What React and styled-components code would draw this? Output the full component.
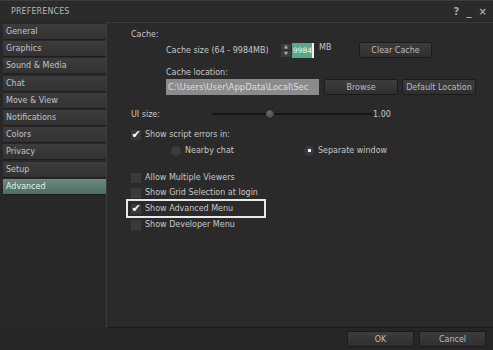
import React from 'react'
import styled, { createGlobalStyle } from 'styled-components'

const Global = createGlobalStyle`
  html, body { margin: 0; padding: 0; background: #1c1c1c; }
  body { font-family: "DejaVu Sans", "Liberation Sans", sans-serif; }
`

const Window = styled.div`
  width: 493px;
  height: 350px;
  background: #262626;
  display: flex;
  flex-direction: column;
  box-sizing: border-box;
  border-top: 1px solid #3c3c3c;
  color: #c8c8c8;
  font-size: 8px;
`

const TitleBar = styled.div`
  height: 20px;
  display: flex;
  align-items: center;
  justify-content: space-between;
  padding: 0 6px 0 11px;
  background: #2b2b2b;
  color: #b4b4b4;
  font-size: 8px;
  letter-spacing: 0.1px;
`

const TitleIcons = styled.div`
  display: flex;
  gap: 7px;
  align-items: center;
  color: #a8a8a8;
  font-size: 10px;
  font-weight: bold;
`

const Body = styled.div`
  flex: 1;
  display: flex;
  min-height: 0;
`

const Sidebar = styled.div`
  width: 103px;
  padding: 3px 0 0 3px;
  display: flex;
  flex-direction: column;
  gap: 1.2px;
  background: #282828;
`

const Tab = styled.div`
  height: 15px;
  flex: none;
  display: flex;
  align-items: center;
  padding-left: 3px;
  font-size: 8px;
  color: ${({ active }) => (active ? '#e6efe9' : '#c4c4c4')};
  background: ${({ active }) =>
    active
      ? 'linear-gradient(#6a8b7e, #4f6e62)'
      : 'linear-gradient(#3c3c3c, #323232)'};
  border-bottom: 1px solid #1e1e1e;
`

const Panel = styled.div`
  flex: 1;
  margin-top: 1px;
  border-top: 1px solid #3d3d3d;
  border-left: 1px solid #3d3d3d;
  border-bottom: 1px solid #1a1a1a;
  background: #2a2a2a;
  padding: 4px 0 0 24px;
  display: flex;
  flex-direction: column;
`

const Label = styled.div`
  height: 14px;
  display: flex;
  align-items: center;
  margin-top: ${({ mt }) => mt || 0}px;
  padding-left: ${({ indent }) => indent || 0}px;
`

const Row = styled.div`
  display: flex;
  align-items: center;
  height: ${({ h }) => h || 16}px;
  margin-top: ${({ mt }) => mt || 0}px;
  padding-left: ${({ indent }) => indent || 0}px;
`

const FixedText = styled.span`
  width: ${({ w }) => w}px;
  flex: none;
  white-space: nowrap;
`

const Button = styled.div`
  width: ${({ w }) => w}px;
  height: 16px;
  box-sizing: border-box;
  display: flex;
  align-items: center;
  justify-content: center;
  margin-left: ${({ ml }) => ml || 0}px;
  background: linear-gradient(#3d3d3d, #2f2f2f);
  border: 1px solid #1b1b1b;
  border-radius: 2px;
  color: #bdbdbd;
  font-size: 8px;
`

const Spinner = styled.div`
  display: flex;
  flex-direction: column;
  gap: 1px;
`

const SpinBtn = styled.div`
  width: 10px;
  height: 6px;
  background: #3c3c3c;
  display: flex;
  align-items: center;
  justify-content: center;
  color: #aaa;
  font-size: 5px;
  line-height: 1;
`

const NumInput = styled.div`
  width: 22px;
  height: 15px;
  box-sizing: border-box;
  background: #5aa889;
  border-right: 2px solid #f2f2f2;
  color: #eaf5ef;
  font-size: 7.5px;
  display: flex;
  align-items: center;
  padding-left: 1px;
  margin-left: 1px;
`

const Unit = styled.span`
  align-self: flex-start;
  margin: 1px 0 0 5px;
  width: 40px;
`

const PathInput = styled.div`
  width: 153px;
  height: 16px;
  box-sizing: border-box;
  background: #8b8b8b;
  color: #dedede;
  font-size: 8.5px;
  display: flex;
  align-items: center;
  padding-left: 2px;
  white-space: nowrap;
`

const Slider = styled.div`
  position: relative;
  width: 160px;
  height: 2px;
  background: #151515;
`

const Knob = styled.div`
  position: absolute;
  left: 53px;
  top: -4px;
  width: 10px;
  height: 10px;
  border-radius: 50%;
  background: radial-gradient(circle at 40% 35%, #6a6a6a, #3a3a3a);
  border: 1px solid #1f1f1f;
  box-sizing: border-box;
`

const Value = styled.span`
  margin-left: 1px;
`

const Check = styled.div`
  width: 10px;
  height: 10px;
  box-sizing: border-box;
  background: #3a3a3a;
  margin-right: 4px;
  color: #ffffff;
  font-size: 11px;
  line-height: 10px;
  font-weight: bold;
  text-align: center;
`

const CheckRow = styled.div`
  display: flex;
  align-items: center;
  height: ${({ focused }) => (focused ? 17 : 15)}px;
  padding-left: 4px;
  margin-left: -4px;
  margin-top: ${({ mt }) => mt || 0}px;
  width: 138px;
  box-sizing: border-box;
  outline: ${({ focused }) => (focused ? '2px solid #e8e8e8' : 'none')};
  outline-offset: -1px;
`

const Radio = styled.div`
  width: 10px;
  height: 10px;
  border-radius: 50%;
  background: #3b3b3b;
  margin-right: 4px;
  display: flex;
  align-items: center;
  justify-content: center;
  &::after {
    content: '';
    width: 3px;
    height: 3px;
    background: ${({ on }) => (on ? '#f0f0f0' : 'transparent')};
  }
`

const RadioItem = styled.div`
  display: flex;
  align-items: center;
  width: ${({ w }) => w}px;
`

const Footer = styled.div`
  height: 22px;
  display: flex;
  justify-content: flex-end;
  align-items: center;
  gap: 5px;
  padding-right: 7px;
`

const tabs = [
  'General', 'Graphics', 'Sound & Media', 'Chat', 'Move & View',
  'Notifications', 'Colors', 'Privacy', 'Setup', 'Advanced',
]

function CheckItem({ checked, focused, mt, children }) {
  return (
    <CheckRow focused={focused} mt={mt}>
      <Check>{checked ? '✔' : ''}</Check>
      {children}
    </CheckRow>
  )
}

export default function App() {
  return (
    <Window>
      <Global />
      <TitleBar>
        PREFERENCES
        <TitleIcons>
          <span>?</span>
          <span>_</span>
          <span>×</span>
        </TitleIcons>
      </TitleBar>
      <Body>
        <Sidebar>
          {tabs.map(t => (
            <Tab key={t} active={t === 'Advanced'}>{t}</Tab>
          ))}
        </Sidebar>
        <Panel>
          <Label>Cache:</Label>
          <Row indent={35} mt={1}>
            <FixedText w={115}>Cache size (64 - 9984MB)</FixedText>
            <Spinner>
              <SpinBtn>▲</SpinBtn>
              <SpinBtn>▼</SpinBtn>
            </Spinner>
            <NumInput>9984</NumInput>
            <Unit>MB</Unit>
            <Button w={73}>Clear Cache</Button>
          </Row>
          <Label indent={35} mt={7}>Cache location:</Label>
          <Row indent={35}>
            <PathInput>C:\Users\User\AppData\Local\Sec</PathInput>
            <Button w={74} ml={5}>Browse</Button>
            <Button w={74} ml={4}>Default Location</Button>
          </Row>
          <Row mt={11}>
            <FixedText w={81}>UI size:</FixedText>
            <Slider><Knob /></Slider>
            <Value>1.00</Value>
          </Row>
          <CheckItem checked mt={5}>Show script errors in:</CheckItem>
          <Row indent={40} h={17}>
            <RadioItem w={133}><Radio />Nearby chat</RadioItem>
            <RadioItem><Radio on />Separate window</RadioItem>
          </Row>
          <CheckItem mt={11}>Allow Multiple Viewers</CheckItem>
          <CheckItem>Show Grid Selection at login</CheckItem>
          <CheckItem checked focused>Show Advanced Menu</CheckItem>
          <CheckItem>Show Developer Menu</CheckItem>
        </Panel>
      </Body>
      <Footer>
        <Button w={67}>OK</Button>
        <Button w={67}>Cancel</Button>
      </Footer>
    </Window>
  )
}
